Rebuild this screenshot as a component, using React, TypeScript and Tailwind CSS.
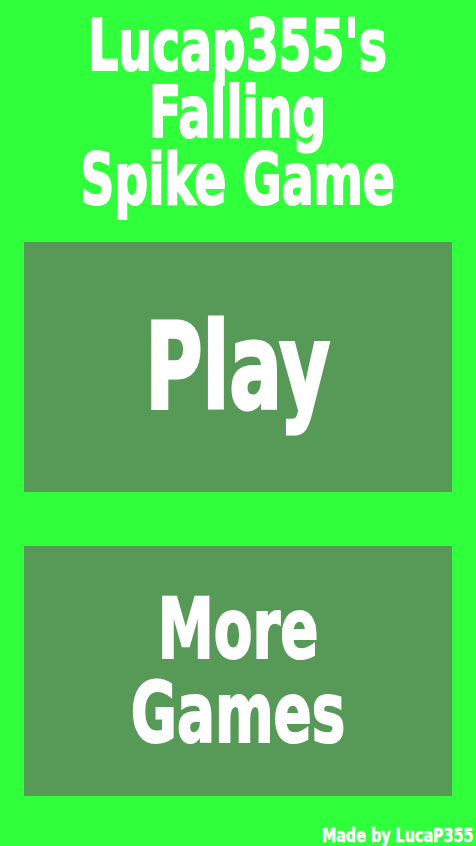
export default function App() {
  const font = {
    fontFamily: "Impact, 'Liberation Sans Narrow', 'DejaVu Sans Condensed', sans-serif",
  };

  return (
    <div
      className="relative flex flex-col w-full h-[846px] bg-[#30ff3b] text-white font-bold"
      style={font}
    >
      {/* title, condensed + stroked to look like Impact */}
      <h1 className="text-center text-[71px] leading-[67px] pt-[12px] whitespace-nowrap [-webkit-text-stroke:2px_white]">
        <span className="inline-block scale-x-[0.74]">
          Lucap355's
          <br />
          Falling
          <br />
          Spike Game
        </span>
      </h1>

      <div className="flex flex-col gap-[54px] px-6 mt-[29px]">
        <button className="flex items-center justify-center h-[250px] bg-[#579a58] text-[119px] leading-none [-webkit-text-stroke:3px_white]">
          <span className="inline-block scale-x-[0.73]">Play</span>
        </button>
        <button className="flex items-center justify-center h-[250px] bg-[#579a58] text-[84px] leading-[84px] whitespace-nowrap [-webkit-text-stroke:2px_white]">
          <span className="inline-block scale-x-[0.745]">
            More
            <br />
            Games
          </span>
        </button>
      </div>

      <p className="absolute right-[2px] bottom-[1px] text-[19px] leading-none origin-right scale-x-[0.84] whitespace-nowrap [-webkit-text-stroke:0.5px_white]">
        Made by LucaP355
      </p>
    </div>
  );
}
